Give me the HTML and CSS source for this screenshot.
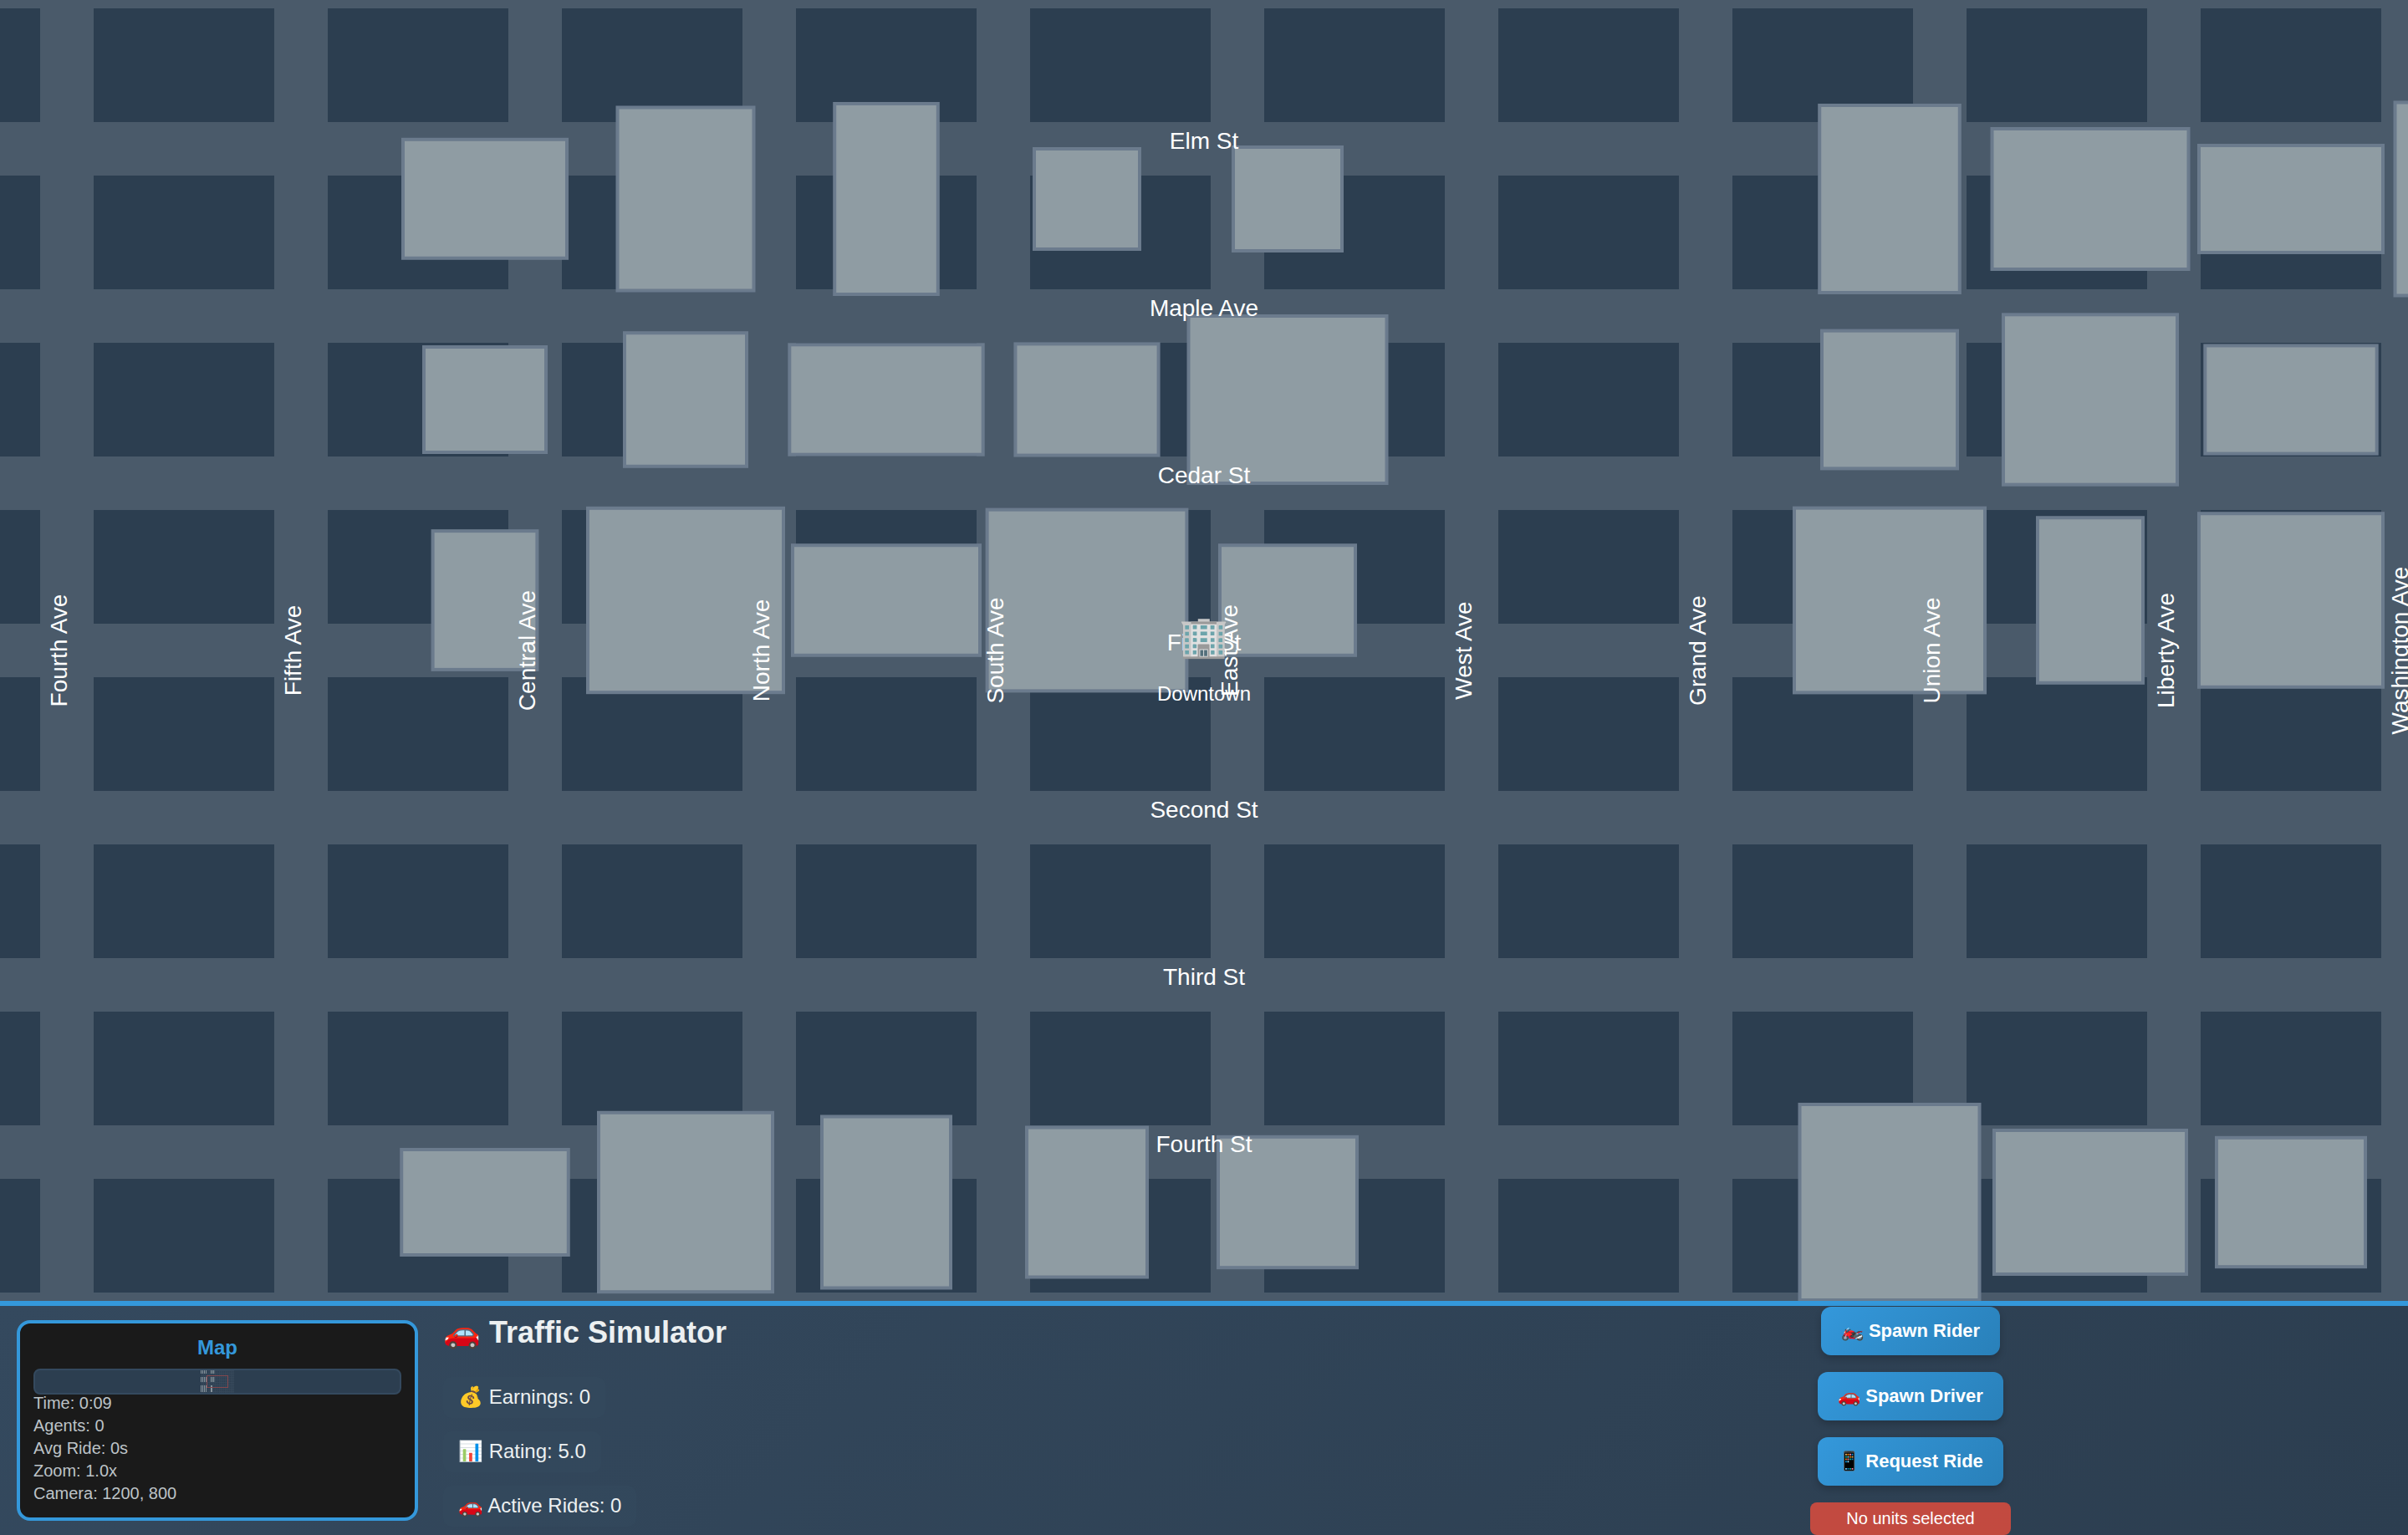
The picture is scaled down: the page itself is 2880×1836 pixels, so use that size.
FILE: index.html
```html
<!DOCTYPE html>
<html lang="en">
<head>
<meta charset="utf-8">
<title>Traffic Simulator</title>
<link rel="stylesheet" href="styles.css">
</head>
<body>
<main class="game">
  <svg class="map" viewBox="0 0 2880 1556" width="2880" height="1556">
    <defs>
      <pattern id="blocks" x="112" y="10" width="280" height="200" patternUnits="userSpaceOnUse">
        <rect class="block" width="216" height="136"/>
      </pattern>
    </defs>
    <rect class="road" width="2880" height="1556"/>
    <rect width="2880" height="1546" fill="url(#blocks)"/>
    <g class="buildings">
      <rect x="482" y="166.8" width="196" height="142"/>
      <rect x="738.5" y="128.5" width="163" height="219"/>
      <rect x="998.2" y="124" width="123.6" height="228"/>
      <rect x="1237" y="178" width="126" height="120"/>
      <rect x="1475" y="176" width="130" height="124"/>
      <rect x="2176.2" y="126" width="167.6" height="224"/>
      <rect x="2382.5" y="154" width="235" height="168"/>
      <rect x="2630" y="174" width="220" height="128"/>
      <rect x="2864.5" y="122.5" width="231" height="231"/>
      <rect x="507" y="415" width="146" height="126"/>
      <rect x="747" y="398.2" width="146" height="159.6"/>
      <rect x="944.3" y="412.3" width="231.4" height="131.4"/>
      <rect x="1214.4" y="411.4" width="171.2" height="133.2"/>
      <rect x="1421.5" y="378" width="237" height="200"/>
      <rect x="2179" y="395.6" width="162" height="164.8"/>
      <rect x="2396" y="376.3" width="208" height="203.4"/>
      <rect x="2637.3" y="413.4" width="205.4" height="129.2"/>
      <rect x="517.6" y="635.1" width="124.8" height="165.8"/>
      <rect x="703" y="607.8" width="234" height="220.4"/>
      <rect x="948" y="652.2" width="224" height="131.6"/>
      <rect x="1180.6" y="609.6" width="238.8" height="216.8"/>
      <rect x="1459" y="652.2" width="162" height="131.6"/>
      <rect x="2146" y="607.6" width="228" height="220.8"/>
      <rect x="2437" y="619.2" width="126" height="197.6"/>
      <rect x="2630" y="614.2" width="220" height="207.6"/>
      <rect x="480.2" y="1375" width="199.6" height="126"/>
      <rect x="716" y="1330.8" width="208" height="214.4"/>
      <rect x="983" y="1335.5" width="154" height="205"/>
      <rect x="1228" y="1348.5" width="144" height="179"/>
      <rect x="1457" y="1359.8" width="166" height="156.4"/>
      <rect x="2152.5" y="1321" width="215" height="234"/>
      <rect x="2385" y="1352" width="230" height="172"/>
      <rect x="2651" y="1360.8" width="178" height="154.4"/>
    </g>
    <g class="street">
      <text x="1440" y="178">Elm St</text>
      <text x="1440" y="378">Maple Ave</text>
      <text x="1440" y="578">Cedar St</text>
      <text x="1440" y="778">First St</text>
      <text x="1440" y="978">Second St</text>
      <text x="1440" y="1178">Third St</text>
      <text x="1440" y="1378">Fourth St</text>
    </g>
    <g class="street">
      <text transform="translate(80 778) rotate(-90)">Fourth Ave</text>
      <text transform="translate(360 778) rotate(-90)">Fifth Ave</text>
      <text transform="translate(640 778) rotate(-90)">Central Ave</text>
      <text transform="translate(920 778) rotate(-90)">North Ave</text>
      <text transform="translate(1200 778) rotate(-90)">South Ave</text>
      <text transform="translate(1480 778) rotate(-90)">East Ave</text>
      <text transform="translate(1760 778) rotate(-90)">West Ave</text>
      <text transform="translate(2040 778) rotate(-90)">Grand Ave</text>
      <text transform="translate(2320 778) rotate(-90)">Union Ave</text>
      <text transform="translate(2600 778) rotate(-90)">Liberty Ave</text>
      <text transform="translate(2880 778) rotate(-90)">Washington Ave</text>
    </g>
    <text class="landmark-icon" x="1440" y="778">🏢</text>
    <text class="landmark" x="1440" y="838">Downtown</text>
  </svg>

  <section class="panel">
    <aside class="minimap">
      <h2 class="minimap-title">Map</h2>
      <svg class="minimap-view" viewBox="0 0 436 27" preserveAspectRatio="none">
        <defs>
          <pattern id="mini-grid" width="2.34" height="2.8" patternUnits="userSpaceOnUse">
            <path class="mini-road" d="M0 .5H2.34M.5 0V2.8"/>
          </pattern>
        </defs>
        <rect x="198" y="0" width="40" height="27" fill="url(#mini-grid)"/>
        <g class="mini-buildings">
          <path d="M198.500 0v4M200.500 0v4M202.500 0v4M204.500 0v4M210.500 0v4M212.300 0v4M213.800 0v4"/>
          <path d="M198.500 8v6M200.500 8v6M202.500 8v6M204.500 8v6M210.500 8v6M212.300 8v6M213.800 8v6"/>
          <path d="M198.500 18v8M200.500 18v8M202.500 18v8M204.500 18v8M210.500 18v8M211.500 18v8"/>
        </g>
        <rect class="mini-viewport" x="205.500" y="6.500" width="25" height="14"/>
      </svg>
      <ul class="minimap-info">
        <li>Time: 0:09</li>
        <li>Agents: 0</li>
        <li>Avg Ride: 0s</li>
        <li>Zoom: 1.0x</li>
        <li>Camera: 1200, 800</li>
      </ul>
    </aside>

    <div class="stats">
      <h1 class="title">🚗 Traffic Simulator</h1>
      <div class="stat">💰 Earnings: 0</div>
      <div class="stat">📊 Rating: 5.0</div>
      <div class="stat">🚗 Active Rides: 0</div>
    </div>

    <div class="controls">
      <button class="btn">🏍️ Spawn Rider</button>
      <button class="btn">🚗 Spawn Driver</button>
      <button class="btn">📱 Request Ride</button>
      <div class="selection">No units selected</div>
    </div>
  </section>
</main>
</body>
</html>
```
FILE: styles.css
```css
* {
  box-sizing: border-box;
  margin: 0;
  padding: 0;
}

body {
  font-family: "Liberation Sans", Arial, sans-serif;
  background: #2c3e50;
  color: #ecf0f1;
  overflow: hidden;
}

.game {
  display: flex;
  flex-direction: column;
  width: 2880px;
  height: 1836px;
}

.map {
  display: block;
  flex: none;
}

.road {
  fill: #4a5a6a;
}

.block {
  fill: #2c3e50;
}

.buildings rect {
  fill: #8f9ca3;
  stroke: #6b7b8d;
  stroke-width: 4;
}

.street text,
.landmark,
.landmark-icon {
  fill: #fff;
  font-size: 28px;
  text-anchor: middle;
}

.street text {
  font-size: 28px;
}

.landmark {
  font-size: 24px;
}

.landmark-icon {
  font-size: 48px;
}

.panel {
  flex: 1;
  display: flex;
  align-items: center;
  min-height: 0;
  padding: 0 20px;
  border-top: 6px solid #3498db;
  background: linear-gradient(135deg, #34495e, #2c3e50);
}

.minimap {
  flex: none;
  display: flex;
  flex-direction: column;
  width: 480px;
  height: 240px;
  padding: 15px 16px 16px;
  border: 4px solid #3498db;
  border-radius: 16px;
  background: #1a1a1a;
}

.minimap-title {
  margin-bottom: 12px;
  color: #3498db;
  font-size: 24px;
  line-height: 27px;
  text-align: center;
}

.minimap-view {
  flex: none;
  width: 440px;
  height: 31px;
  border: 2px solid #34495e;
  border-radius: 8px;
  background: #2c3e50;
}

.mini-road {
  stroke: #36485a;
  stroke-width: 1;
}

.mini-buildings {
  fill: none;
  stroke: #87949c;
  stroke-width: 1;
}

.mini-viewport {
  fill: none;
  stroke: #82474d;
}

.minimap-info {
  margin-top: -3px;
  list-style: none;
  color: #bdc3c7;
  font-size: 20px;
  line-height: 27px;
}

.stats {
  flex: 1;
  align-self: flex-start;
  display: flex;
  flex-direction: column;
  align-items: flex-start;
  gap: 16px;
  margin-left: 30px;
  padding-top: 11px;
}

.title {
  margin-bottom: 16px;
  font-size: 36px;
  line-height: 42px;
}

.stat {
  height: 49px;
  padding: 0 18px;
  border-radius: 10px;
  background: rgba(52, 73, 94, 0.5);
  font-size: 24px;
  line-height: 47px;
}

.controls {
  flex: none;
  display: flex;
  flex-direction: column;
  align-items: center;
  gap: 20px;
  width: 240px;
  margin-right: 455px;
}

.btn {
  height: 58px;
  padding: 0 24px;
  border: 0;
  border-radius: 12px;
  background: linear-gradient(135deg, #3498db, #2980b9);
  box-shadow: 0 4px 8px rgba(0, 0, 0, 0.2);
  color: #fff;
  font: bold 22px "Liberation Sans", Arial, sans-serif;
}

.selection {
  width: 240px;
  height: 39px;
  border-radius: 8px;
  background: rgba(231, 76, 60, 0.8);
  color: #fff;
  font-size: 20px;
  line-height: 38px;
  text-align: center;
}
```
